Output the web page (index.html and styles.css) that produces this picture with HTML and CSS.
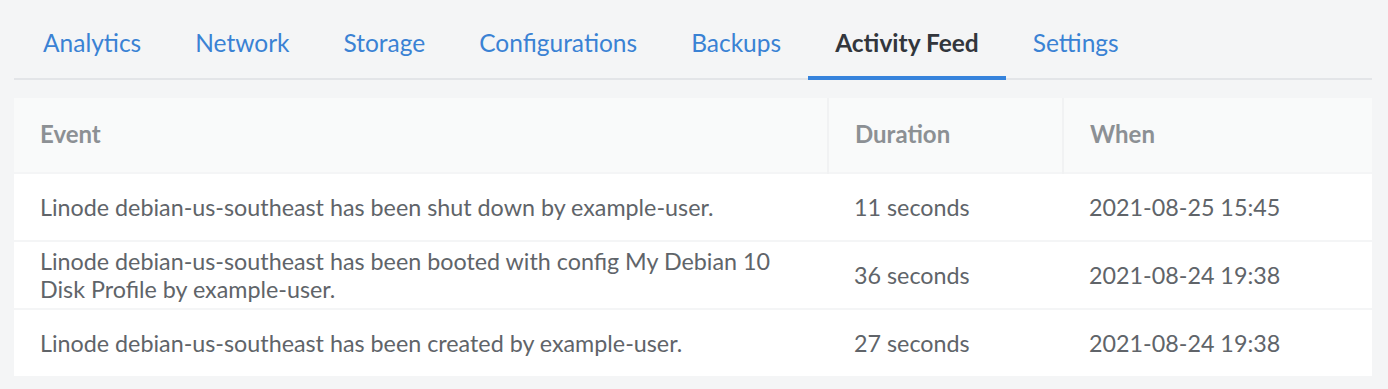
FILE: index.html
```html
<!DOCTYPE html>
<html lang="en">
<head>
    <meta charset="UTF-8">
    <title>Activity Feed</title>
    <link rel="stylesheet" href="styles.css">
</head>
<body>
    <div class="page">
        <nav class="tabs">
            <a class="tab" href="#">Analytics</a>
            <a class="tab" href="#">Network</a>
            <a class="tab" href="#">Storage</a>
            <a class="tab" href="#">Configurations</a>
            <a class="tab" href="#">Backups</a>
            <a class="tab active" href="#">Activity Feed</a>
            <a class="tab" href="#">Settings</a>
        </nav>

        <table class="feed">
            <thead>
                <tr>
                    <th class="col-event">Event</th>
                    <th class="col-duration">Duration</th>
                    <th class="col-when">When</th>
                </tr>
            </thead>
            <tbody>
                <tr>
                    <td>Linode debian-us-southeast has been shut down by example-user.</td>
                    <td>11 seconds</td>
                    <td>2021-08-25 15:45</td>
                </tr>
                <tr>
                    <td>Linode debian-us-southeast has been booted with config My Debian 10 Disk Profile by example-user.</td>
                    <td>36 seconds</td>
                    <td>2021-08-24 19:38</td>
                </tr>
                <tr>
                    <td>Linode debian-us-southeast has been created by example-user.</td>
                    <td>27 seconds</td>
                    <td>2021-08-24 19:38</td>
                </tr>
            </tbody>
        </table>
    </div>
</body>
</html>
```

FILE: styles.css
```css
body, html {
    margin: 0;
    padding: 0;
    background: #f4f5f6;
    font-family: Lato, "Noto Sans", sans-serif;
}
.page {
    padding: 0 16px 0 14px;
}
/* Tabs */
.tabs {
    display: flex;
    height: 78px;
    border-bottom: 2px solid #e3e5e8;
    padding-left: 2px;
    margin-bottom: 18px;
}
.tab {
    display: flex;
    align-items: center;
    padding: 8px 27px 0;
    margin-bottom: -2px;
    font-size: 24.5px;
    color: #3a82d4;
    text-decoration: none;
    border-bottom: 4px solid transparent;
}
.tab.active {
    color: #32363c;
    font-weight: bold;
    border-bottom-color: #3683dc;
}
/* Table */
.feed {
    width: 100%;
    border-collapse: collapse;
    background: #fff;
    font-size: 23.3px;
    color: #606469;
}
.feed th {
    height: 70px;
    padding: 0 26px 4px;
    text-align: left;
    font-weight: bold;
    font-size: 24px;
    color: #8c9094;
    background: #f9fafa;
    border-left: 2px solid #f1f2f3;
}
.feed th:first-child {
    border-left: none;
}
.feed td {
    height: 66px;
    padding: 0 26px;
    line-height: 28px;
    border-top: 2px solid #f4f5f6;
}
.col-event {
    width: 761px;
}
.col-duration {
    width: 181px;
}
```
